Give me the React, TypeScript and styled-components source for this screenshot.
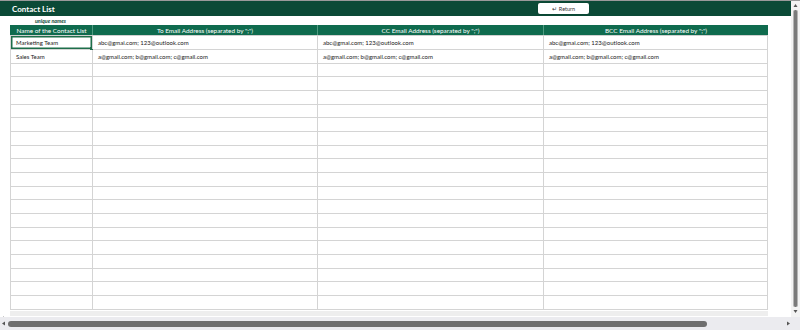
import React from "react";
import styled, { createGlobalStyle } from "styled-components";

const Global = createGlobalStyle`
  html, body {
    margin: 0;
    padding: 0;
    background: #ffffff;
    font-family: Lato, "Liberation Sans", sans-serif;
  }
`;

const COLS = "82px 225px 226px 225px";

const Screen = styled.div`
  width: 800px;
  height: 330px;
  overflow: hidden;
  display: flex;
  flex-direction: column;
  border-top: 1px solid #9a9a9a;
  box-sizing: border-box;
`;

const Main = styled.div`
  flex: 1;
  display: flex;
  min-height: 0;
`;

const Sheet = styled.div`
  flex: 1;
  display: flex;
  flex-direction: column;
  min-width: 0;
  background: linear-gradient(#c8c8c8, #c8c8c8) 3px 0 / 1px 100% no-repeat, #fff;
`;

const TitleBar = styled.div`
  height: 15px;
  background: #0b4a36;
  display: grid;
  grid-template-columns: 538px 51px 1fr;
  align-items: center;
`;

const Title = styled.div`
  padding-left: 12px;
  color: #ffffff;
  font-weight: 700;
  font-size: 8px;
`;

const ReturnButton = styled.div`
  height: 11px;
  background: #ffffff;
  border-radius: 2px;
  box-shadow: 0 0 1px rgba(0, 0, 0, 0.4);
  color: #333;
  font-size: 5.5px;
  display: flex;
  align-items: center;
  justify-content: center;
  gap: 2px;
`;

const NoteRow = styled.div`
  height: 9px;
  display: flex;
  align-items: center;
  padding-left: 35px;
  background: #fff;
`;

const Note = styled.div`
  font-size: 5.3px;
  font-style: italic;
  font-weight: 700;
  color: #0b4a36;
  padding-top: 1px;
  white-space: nowrap;
`;

const Table = styled.div`
  display: flex;
  flex-direction: column;
  padding-left: 10px;
  width: 768px;
  box-sizing: border-box;
  background: #fff;
`;

const HeaderRow = styled.div`
  height: 11px;
  display: grid;
  grid-template-columns: ${COLS};
  background: #0f6b4e;
  border-bottom: 1px solid #d0d0d0;
  box-sizing: border-box;
`;

const HeaderCell = styled.div<{ $first?: boolean }>`
  color: #ffffff;
  font-size: 6.4px;
  display: flex;
  align-items: center;
  justify-content: center;
  border-left: 1px solid ${(p) => (p.$first ? "#0f6b4e" : "#4f9a80")};
  white-space: nowrap;
`;

const Row = styled.div<{ $h: number }>`
  height: ${(p) => p.$h}px;
  display: grid;
  grid-template-columns: ${COLS};
  border-bottom: 1px solid #d4d4d4;
  box-sizing: border-box;
`;

const Cell = styled.div<{ $selected?: boolean }>`
  font-size: 6px;
  color: #1a1a1a;
  display: flex;
  align-items: center;
  padding-left: 5px;
  border-left: 1px solid #d4d4d4;
  box-shadow: ${(p) => (p.$selected ? "inset 0 0 0 1.5px #1e6e4a" : "none")};
  position: relative;
  white-space: nowrap;
  &:last-child {
    border-right: 1px solid #d4d4d4;
  }
`;

const Handle = styled.span`
  position: absolute;
  right: -1px;
  bottom: -1px;
  width: 3px;
  height: 3px;
  background: #1e6e4a;
`;

const Tail = styled.div`
  height: 5px;
  background: #eeeeee;
  margin-top: 1px;
`;

const VScroll = styled.div`
  width: 9px;
  background: #f3f3f3;
  display: flex;
  flex-direction: column;
  align-items: center;
  padding: 2px 0 3px;
  box-sizing: border-box;
  gap: 2px;
`;

const VThumb = styled.div`
  flex: 1;
  width: 3px;
  background: #7a7a7a;
  border-left: 1px solid #b5b5b5;
  border-right: 1px solid #b5b5b5;
  border-radius: 2px;
`;

const HScroll = styled.div`
  height: 13px;
  background: #ebebef;
  display: flex;
  align-items: center;
  padding: 0 9px 0 1px;
  gap: 2px;
`;

const HTrack = styled.div`
  flex: 1;
  display: flex;
  align-items: center;
`;

const HThumb = styled.div`
  width: 699px;
  height: 6px;
  background: #6e6e6e;
  border-radius: 3px;
`;

const Arrow = styled.svg`
  flex: none;
  width: 5px;
  height: 5px;
  fill: #555;
`;

const emails = {
  marketing: "abc@gmai.com; 123@outlook.com",
  sales: "a@gmail.com; b@gmail.com; c@gmail.com",
};

const data: string[][] = [
  ["Marketing Team", emails.marketing, emails.marketing, emails.marketing],
  ["Sales Team", emails.sales, emails.sales, emails.sales],
];

const heights = Array.from({ length: 20 }, (_, i) => (i % 3 === 2 ? 13 : 14));

export default function App() {
  return (
    <>
      <Global />
      <Screen>
        <Main>
          <Sheet>
            <TitleBar>
              <Title>Contact List</Title>
              <ReturnButton>
                <span>↵</span>
                <span>Return</span>
              </ReturnButton>
            </TitleBar>
            <NoteRow>
              <Note>unique names</Note>
            </NoteRow>
            <Table>
              <HeaderRow>
                <HeaderCell $first>Name of the Contact List</HeaderCell>
                <HeaderCell>To Email Address (separated by ";")</HeaderCell>
                <HeaderCell>CC Email Address (separated by ";")</HeaderCell>
                <HeaderCell>BCC Email Address (separated by ";")</HeaderCell>
              </HeaderRow>
              {heights.map((h, i) => {
                const r = data[i] || ["", "", "", ""];
                return (
                  <Row key={i} $h={h}>
                    {r.map((c, j) => (
                      <Cell key={j} $selected={i === 0 && j === 0}>
                        {c}
                        {i === 0 && j === 0 && <Handle />}
                      </Cell>
                    ))}
                  </Row>
                );
              })}
              <Tail />
            </Table>
          </Sheet>
          <VScroll>
            <Arrow viewBox="0 0 10 10">
              <path d="M5 2 L9 8 L1 8 Z" />
            </Arrow>
            <VThumb />
            <Arrow viewBox="0 0 10 10">
              <path d="M1 2 L9 2 L5 8 Z" />
            </Arrow>
          </VScroll>
        </Main>
        <HScroll>
          <Arrow viewBox="0 0 10 10">
            <path d="M2 5 L8 1 L8 9 Z" />
          </Arrow>
          <HTrack>
            <HThumb />
          </HTrack>
          <Arrow viewBox="0 0 10 10">
            <path d="M8 5 L2 1 L2 9 Z" />
          </Arrow>
        </HScroll>
      </Screen>
    </>
  );
}
